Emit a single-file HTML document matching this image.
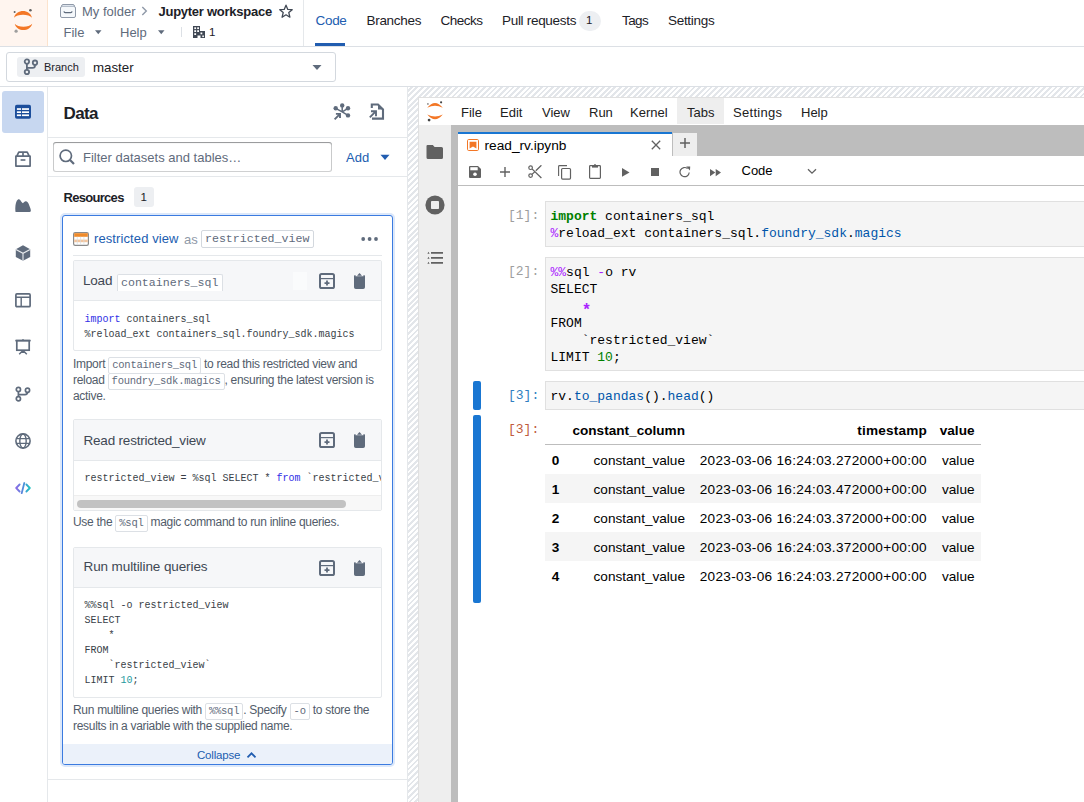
<!DOCTYPE html>
<html><head><meta charset="utf-8">
<style>
*{box-sizing:border-box;margin:0;padding:0}
html,body{width:1084px;height:802px;overflow:hidden;background:#fff;font-family:"Liberation Sans",sans-serif;color:#1C2127}
.a{position:absolute}
.t{position:absolute;white-space:pre;line-height:1}
.mono{font-family:"Liberation Mono",monospace}
svg{display:block}
.cd{font-family:"Liberation Mono",monospace;font-size:10.5px;letter-spacing:-0.25px;line-height:1;border:1px solid #DCE0E5;border-radius:2px;padding:1px 3px 2px;color:#5F6B7C;background:#fff}
</style></head><body>

<!-- ===== HEADER ===== -->
<div class="a" style="left:0;top:0;width:48px;height:46px;background:#FFF5EF;border-right:1px solid #FCE3CD"></div>
<div class="a" style="left:0;top:46px;width:1084px;height:1px;background:#DCE0E5"></div>
<div class="a" style="left:303px;top:0;width:1px;height:46px;background:#E5E8EB"></div>

<!-- header content -->
<svg class="a" style="left:12px;top:8px" width="24" height="26" viewBox="0 0 24 26">
 <path d="M2 9.8 C4 0.7 18 0.7 20 9.8 C17 5.6 5 5.6 2 9.8Z" fill="#F37726"/>
 <path d="M2.7 15.8 C4.7 24.2 18.2 24.2 20.2 15.8 C17.2 19.6 5.7 19.6 2.7 15.8Z" fill="#F37726"/>
 <circle cx="2.6" cy="4.1" r="1" fill="#616161"/>
 <circle cx="18.4" cy="2.3" r="1.3" fill="#616161"/>
 <circle cx="4.1" cy="23.2" r="1.6" fill="#9E9E9E"/>
</svg>
<svg class="a" style="left:60px;top:4px" width="16" height="14" viewBox="0 0 16 14">
 <rect x="0.5" y="2.5" width="15" height="11" rx="1.5" fill="#F5F8FB" stroke="#8F99A8"/>
 <path d="M1.5 2.5 Q1.5 0.5 3 0.5 H13 Q14.5 0.5 14.5 2.5" fill="#DCE3EC" stroke="#8F99A8"/>
 <path d="M4 7.3 Q4 8.6 5.2 8.6 H10.8 Q12 8.6 12 7.3" fill="none" stroke="#5F6B7C" stroke-width="1.1"/>
</svg>
<div class="t" style="left:82px;top:5px;font-size:13px;color:#5F6B7C">My folder</div>
<svg class="a" style="left:141px;top:6px" width="7" height="10" viewBox="0 0 7 10"><path d="M1.3 1 L5.3 5 L1.3 9" fill="none" stroke="#8F99A8" stroke-width="1.4"/></svg>
<div class="t" style="left:158.5px;top:5px;font-size:13px;font-weight:bold;letter-spacing:-0.26px;color:#1C2127">Jupyter workspace</div>
<svg class="a" style="left:279px;top:3.5px" width="14" height="15" viewBox="0 0 14 15"><path d="M7 1.2 L8.8 5.4 L13.2 5.7 L9.8 8.6 L10.9 13.2 L7 10.8 L3.1 13.2 L4.2 8.6 L0.8 5.7 L5.2 5.4Z" fill="none" stroke="#404854" stroke-width="1.3" stroke-linejoin="round"/></svg>
<div class="t" style="left:63.5px;top:26px;font-size:13px;color:#5F6B7C">File</div>
<svg class="a" style="left:95px;top:30px" width="7" height="5" viewBox="0 0 7 5"><path d="M0 0.3H6.5L3.25 4.2Z" fill="#5F6B7C"/></svg>
<div class="t" style="left:120px;top:26px;font-size:13px;color:#5F6B7C">Help</div>
<svg class="a" style="left:157.5px;top:30px" width="7" height="5" viewBox="0 0 7 5"><path d="M0 0.3H6.5L3.25 4.2Z" fill="#5F6B7C"/></svg>
<div class="a" style="left:181px;top:27px;width:1px;height:10px;background:#DCE0E5"></div>
<svg class="a" style="left:193px;top:26px" width="12" height="12" viewBox="0 0 12 12">
 <path d="M0 0H7V5H12V12H7.5V9.5H4.5V12H0Z" fill="#404854"/>
 <rect x="1.3" y="1.3" width="1.8" height="1.8" fill="#fff"/><rect x="4.2" y="1.3" width="1.8" height="1.8" fill="#fff"/>
 <rect x="1.3" y="4.2" width="1.8" height="1.8" fill="#fff"/><rect x="4.2" y="4.2" width="1.8" height="1.8" fill="#fff"/>
 <rect x="7.5" y="6.5" width="1.8" height="1.8" fill="#fff"/><rect x="1.3" y="7.2" width="1.8" height="1.8" fill="#fff"/>
 <rect x="9.3" y="9.5" width="1.6" height="1.6" fill="#fff"/>
</svg>
<div class="t" style="left:209px;top:27px;font-size:11.5px;color:#1C2127">1</div>

<div class="t" style="left:315.5px;top:14px;font-size:13.5px;letter-spacing:-0.3px;color:#215DB0">Code</div>
<div class="a" style="left:315px;top:43px;width:30px;height:3px;background:#215DB0"></div>
<div class="t" style="left:366.5px;top:14px;font-size:13.5px;letter-spacing:-0.3px">Branches</div>
<div class="t" style="left:440.5px;top:14px;font-size:13.5px;letter-spacing:-0.5px">Checks</div>
<div class="t" style="left:502px;top:14px;font-size:13.5px;letter-spacing:-0.3px">Pull requests</div>
<div class="a" style="left:579px;top:11px;width:22px;height:20px;border-radius:10px;background:#EDEFF2"></div>
<div class="t" style="left:586px;top:15px;font-size:11.5px">1</div>
<div class="t" style="left:622px;top:14px;font-size:13.5px;letter-spacing:-0.6px">Tags</div>
<div class="t" style="left:668px;top:14px;font-size:13.5px;letter-spacing:-0.3px">Settings</div>

<!-- ===== BRANCH BAR ===== -->
<div class="a" style="left:6px;top:52px;width:330px;height:30px;border:1px solid #D3D8DE;border-radius:3px"></div>
<div class="a" style="left:17px;top:57px;width:68px;height:20px;background:#EDEFF2;border-radius:3px"></div>
<svg class="a" style="left:23px;top:58px" width="16" height="18" viewBox="0 0 16 18">
 <circle cx="3.9" cy="3.6" r="2.2" fill="none" stroke="#5F6B7C" stroke-width="1.8"/>
 <circle cx="12" cy="4.7" r="2.2" fill="none" stroke="#5F6B7C" stroke-width="1.8"/>
 <circle cx="3.9" cy="14" r="2.2" fill="none" stroke="#5F6B7C" stroke-width="1.8"/>
 <path d="M3.9 5.8V11.8M12 6.9V7.5Q12 9.9 9.6 9.9H3.9" fill="none" stroke="#5F6B7C" stroke-width="1.8"/>
</svg>
<div class="t" style="left:44px;top:62px;font-size:11px;color:#1C2127">Branch</div>
<div class="t" style="left:93px;top:61px;font-size:13.3px;color:#1C2127">master</div>
<svg class="a" style="left:312px;top:64px" width="10" height="7" viewBox="0 0 10 7"><path d="M0.5 1H9.5L5 6Z" fill="#5F6B7C"/></svg>
<div class="a" style="left:0;top:86px;width:1084px;height:1px;background:#DCE0E5"></div>

<!-- ===== LEFT SIDEBAR ===== -->
<div class="a" style="left:47px;top:87px;width:1px;height:715px;background:#E5E8EB"></div>
<div class="a" style="left:2px;top:91px;width:42px;height:42px;background:#C7D7F0;border-radius:3px"></div>

<svg class="a" style="left:15px;top:104px" width="16" height="16" viewBox="0 0 16 16">
 <rect x="0" y="0.8" width="16" height="14" rx="1.8" fill="#1C4E9B"/>
 <rect x="1.9" y="4.2" width="4.2" height="1.7" fill="#fff"/><rect x="7" y="4.2" width="7" height="1.7" fill="#fff"/>
 <rect x="1.9" y="7.3" width="4.2" height="1.7" fill="#fff"/><rect x="7" y="7.3" width="7" height="1.7" fill="#fff"/>
 <rect x="1.9" y="10.4" width="4.2" height="1.7" fill="#fff"/><rect x="7" y="10.4" width="7" height="1.7" fill="#fff"/>
</svg>
<svg class="a" style="left:15px;top:151px" width="16" height="16" viewBox="0 0 16 16">
 <path d="M1.8 5.2 L3.8 1.2 H12.2 L14.2 5.2 M8 1.2 V5.2 M0.9 5.2 H15.1 V15.1 H0.9Z" fill="none" stroke="#5F6B7C" stroke-width="1.7" stroke-linejoin="round"/>
 <rect x="5.6" y="8.2" width="4.8" height="1.6" fill="#5F6B7C"/>
</svg>
<svg class="a" style="left:15px;top:198px" width="17" height="15" viewBox="0 0 17 15">
 <path d="M0.4 13.4 C0 9 0.6 5 1.8 2.8 C2.8 0.9 4.3 0.6 5.4 2.2 C6.2 3.4 7 4.8 8 5.2 C8.8 4.6 9.6 3.4 10.7 3.3 C12 3.2 13.3 4.6 14.3 7.5 C15.2 9.8 16.2 12.2 15.8 13.3 C15.6 13.9 15 14 14 14 H1.4 C0.8 14 0.5 13.8 0.4 13.4Z" fill="#5F6B7C"/>
</svg>
<svg class="a" style="left:15px;top:245px" width="16" height="16" viewBox="0 0 16 16">
 <path d="M8 0.3 L15.2 4.2 V12 L8 15.8 L0.8 12 V4.2Z" fill="#5F6B7C"/>
 <path d="M0.9 4.4 L8 8.3 L15.1 4.4 M8 8.3 V15.8" fill="none" stroke="#E8EBEE" stroke-width="1.1"/>
</svg>
<svg class="a" style="left:15px;top:292px" width="16" height="16" viewBox="0 0 16 16">
 <rect x="0.9" y="1.9" width="14.2" height="12.8" rx="1" fill="none" stroke="#5F6B7C" stroke-width="1.7"/>
 <path d="M1 5.2 H15 M6.2 5.2 V14.5" fill="none" stroke="#5F6B7C" stroke-width="1.4"/>
</svg>
<svg class="a" style="left:15px;top:339px" width="16" height="16" viewBox="0 0 16 16">
 <path d="M0.3 1.6 H15.7" stroke="#5F6B7C" stroke-width="1.6"/>
 <rect x="7.4" y="0" width="1.2" height="1" fill="#5F6B7C"/>
 <rect x="1.8" y="1.6" width="12.4" height="9.6" fill="none" stroke="#5F6B7C" stroke-width="1.7"/>
 <path d="M8 11 V14 M8 11.5 L4.2 15.2 M8 11.5 L11.8 15.2" fill="none" stroke="#5F6B7C" stroke-width="1.5"/>
</svg>
<svg class="a" style="left:15px;top:386px" width="16" height="16" viewBox="0 0 16 16">
 <circle cx="3.4" cy="3.4" r="2.1" fill="none" stroke="#5F6B7C" stroke-width="1.7"/>
 <circle cx="12.5" cy="4.2" r="2.1" fill="none" stroke="#5F6B7C" stroke-width="1.7"/>
 <circle cx="3.4" cy="12.7" r="2.1" fill="none" stroke="#5F6B7C" stroke-width="1.7"/>
 <path d="M3.4 5.5 V10.6 M12.5 6.3 Q12.5 8.6 10 8.6 H3.4" fill="none" stroke="#5F6B7C" stroke-width="1.7"/>
</svg>
<svg class="a" style="left:15px;top:433px" width="16" height="16" viewBox="0 0 16 16">
 <circle cx="8" cy="8" r="7.1" fill="none" stroke="#5F6B7C" stroke-width="1.6"/>
 <ellipse cx="8" cy="8" rx="3.2" ry="7" fill="none" stroke="#5F6B7C" stroke-width="1.4"/>
 <path d="M1 5.6 H15 M1 10.4 H15" stroke="#5F6B7C" stroke-width="1.4"/>
</svg>
<svg class="a" style="left:15px;top:482px" width="16" height="12" viewBox="0 0 16 12">
 <defs><linearGradient id="cg" x1="0" y1="0" x2="1" y2="0"><stop offset="0" stop-color="#8B6BE6"/><stop offset="0.55" stop-color="#4C8FD9"/><stop offset="1" stop-color="#1FC2C2"/></linearGradient></defs>
 <path d="M4.6 2.5 L1.2 6 L4.6 9.5 M11.4 2.5 L14.8 6 L11.4 9.5 M9.3 1 L6.7 11.2" fill="none" stroke="url(#cg)" stroke-width="1.8" stroke-linecap="round" stroke-linejoin="round"/>
</svg>

<!-- ===== DATA PANEL ===== -->
<div class="t" style="left:63.5px;top:105px;font-size:17px;font-weight:bold;letter-spacing:-0.6px;color:#1C2127">Data</div>
<svg class="a" style="left:333px;top:103px" width="18" height="18" viewBox="0 0 18 18">
 <path d="M9.2 8.9 L9.2 2.5 M9.2 8.9 L2.7 5.3 M9.2 8.9 L15 5.3 M9.2 8.9 L15 12.3" stroke="#5F6B7C" stroke-width="1.5"/>
 <circle cx="9.2" cy="2.4" r="2.2" fill="#5F6B7C"/><circle cx="2.7" cy="5.3" r="2.2" fill="#5F6B7C"/>
 <circle cx="15" cy="5.3" r="2.2" fill="#5F6B7C"/><circle cx="15" cy="12.4" r="2.2" fill="#5F6B7C"/>
 <path d="M1.6 16.3 L6.6 11.3 M2.9 10.9 H7 V15" fill="none" stroke="#5F6B7C" stroke-width="1.9"/>
</svg>
<svg class="a" style="left:369px;top:103px" width="16" height="18" viewBox="0 0 16 18">
 <path d="M2.8 5 V1.5 H9 L14 6.4 V15.6 H3" fill="none" stroke="#5F6B7C" stroke-width="2.1"/>
 <path d="M9 1.5 V6.4 H14Z" fill="#5F6B7C"/>
 <path d="M0.8 14.4 L6 9.2 M2 8.3 H7 V13.2" fill="none" stroke="#5F6B7C" stroke-width="1.9"/>
</svg>
<div class="a" style="left:52.5px;top:142px;width:279px;height:30px;border-radius:3px;background:#fff;box-shadow:inset 0 0 0 1px rgba(17,20,24,.2),inset 0 1px 1px rgba(17,20,24,.3)"></div>
<svg class="a" style="left:58px;top:148px" width="18" height="18" viewBox="0 0 18 18">
 <circle cx="7.8" cy="7.8" r="5.7" fill="none" stroke="#5F6B7C" stroke-width="1.7"/>
 <path d="M11.8 11.8 L16 16" stroke="#5F6B7C" stroke-width="2.2"/>
</svg>
<div class="t" style="left:83px;top:151px;font-size:13px;color:#5F6B7C">Filter datasets and tables…</div>
<div class="t" style="left:346px;top:151px;font-size:13px;color:#215DB0">Add</div>
<svg class="a" style="left:380px;top:154px" width="10" height="7" viewBox="0 0 10 7"><path d="M0.5 0.8H9.5L5 6Z" fill="#215DB0"/></svg>
<div class="t" style="left:63.5px;top:191px;font-size:13px;font-weight:bold;letter-spacing:-0.7px;color:#1C2127">Resources</div>
<div class="a" style="left:134px;top:187px;width:20px;height:20px;border-radius:3px;background:#EDEFF2"></div>
<div class="t" style="left:140.5px;top:192px;font-size:11.5px;color:#1C2127">1</div>

<div class="a" style="left:48px;top:137px;width:359px;height:1px;background:#E5E8EB"></div>
<div class="a" style="left:48px;top:176px;width:359px;height:1px;background:#E5E8EB"></div>
<div class="a" style="left:48px;top:779px;width:359px;height:1px;background:#E5E8EB"></div>
<div class="a" style="left:407px;top:87px;width:1px;height:715px;background:#E5E8EB"></div>

<!-- ===== RESOURCE CARD ===== -->
<div class="a" style="left:62px;top:215px;width:331px;height:550px;border:1px solid #3B7BE0;border-radius:3px;box-shadow:0 0 0 2px #DCE8FA;background:#fff;overflow:hidden">
  <div class="a" style="left:0;top:528px;width:329px;height:20px;background:#EBF1FA"></div>
</div>
<svg class="a" style="left:73px;top:232px" width="16" height="14" viewBox="0 0 16 14">
 <rect x="0.6" y="0.6" width="14.8" height="12.8" rx="1.6" fill="#fff" stroke="#8A8A8A" stroke-width="1.2"/>
 <rect x="1.2" y="1.2" width="13.6" height="3.6" fill="#EF8A2A"/>
 <rect x="1.2" y="7.6" width="13.6" height="2.6" fill="#F3C59E"/>
 <path d="M4.3 4.8V13M7.6 4.8V13M10.9 4.8V13" stroke="#D9DEE3" stroke-width="0.7"/>
</svg>
<div class="t" style="left:94px;top:232px;font-size:13px;color:#215DB0;letter-spacing:0.1px">restricted view</div>
<div class="t" style="left:184px;top:233px;font-size:13px;color:#8F99A8">as</div>
<div class="a" style="left:201px;top:230px;width:113px;height:18px;border:1px solid #D3D8DE;border-radius:2px"></div>
<div class="t mono" style="left:205px;top:233px;font-size:11.6px;color:#5F6B7C">restricted_view</div>
<svg class="a" style="left:361px;top:236px" width="18" height="6" viewBox="0 0 18 6"><circle cx="2.2" cy="3" r="1.9" fill="#5F6B7C"/><circle cx="8.6" cy="3" r="1.9" fill="#5F6B7C"/><circle cx="15" cy="3" r="1.9" fill="#5F6B7C"/></svg>
<div class="a" style="left:73px;top:255px;width:309px;height:1px;background:#E5E8EB"></div>

<!-- inner card 1 -->
<div class="a" style="left:73px;top:260px;width:309px;height:91px;border:1px solid #E5E8EB;border-radius:2px;background:#fff;overflow:hidden">
  <div class="a" style="left:0;top:0;width:307px;height:40px;background:#F6F7F9;border-bottom:1px solid #E5E8EB"></div>
  <div class="t" style="left:9px;top:13px;font-size:13.5px;color:#404854;letter-spacing:-0.2px">Load</div>
  <div class="a" style="left:43px;top:13px;width:106px;height:17px;border:1px solid #DCE0E5;border-bottom:none;border-radius:2px 2px 0 0;background:#fff"></div>
  <div class="t mono" style="left:47px;top:16px;font-size:11.6px;color:#5F6B7C">containers_sql</div>
  <div class="a" style="left:219px;top:11px;width:14px;height:18px;background:#FAFBFC"></div>
  <div class="t mono" style="left:10.5px;top:51px;font-size:10px;line-height:15px;color:#383E47"><span style="color:#2F2FE6">import</span> containers_sql
%reload_ext containers_sql.foundry_sdk.magics</div>
</div>
<div class="t" style="left:73px;top:356px;font-size:12px;line-height:16px;letter-spacing:-0.3px;color:#525C6A">Import <span class="cd">containers_sql</span> to read this restricted view and
reload <span class="cd">foundry_sdk.magics</span>, ensuring the latest version is
active.</div>

<svg class="a" style="left:319px;top:273px" width="16" height="16" viewBox="0 0 16 16">
 <rect x="1" y="1" width="14" height="14" rx="1.6" fill="none" stroke="#5F6B7C" stroke-width="2"/>
 <path d="M1.5 5.6 H14.5" stroke="#5F6B7C" stroke-width="1.2"/>
 <path d="M8 7.6 V12.6 M5.5 10.1 H10.5" stroke="#5F6B7C" stroke-width="1.8"/>
</svg>
<svg class="a" style="left:354px;top:273px" width="11" height="16" viewBox="0 0 11 16">
 <path d="M0 3.3 Q0 1.9 1.5 1.9 V3.2 H9.5 V1.9 Q11 1.9 11 3.3 V14.2 Q11 16 9.2 16 H1.8 Q0 16 0 14.2Z" fill="#5F6B7C"/>
 <path d="M3 2.7 L5.5 0 L8 2.7Z" fill="#5F6B7C"/>
</svg>
<!-- inner card 2 -->
<div class="a" style="left:73px;top:419px;width:309px;height:92px;border:1px solid #E5E8EB;border-radius:2px;background:#fff;overflow:hidden">
  <div class="a" style="left:0;top:0;width:307px;height:41px;background:#F6F7F9;border-bottom:1px solid #E5E8EB"></div>
  <div class="t" style="left:9.5px;top:13.5px;font-size:13.5px;color:#404854;letter-spacing:-0.2px">Read restricted_view</div>
  <div class="t mono" style="left:10.5px;top:51px;font-size:10px;line-height:15px;color:#383E47">restricted_view = %sql SELECT * <span style="color:#2F2FE6">from</span> `restricted_view`</div>
  <div class="a" style="left:0;top:75px;width:307px;height:15px;background:#F8F8F8;border-top:1px solid #EEEEEE"></div>
  <div class="a" style="left:3px;top:80px;width:269px;height:8px;border-radius:4px;background:#C2C2C2"></div>
</div>
<div class="t" style="left:73px;top:514px;font-size:12px;line-height:16px;letter-spacing:-0.3px;color:#525C6A">Use the <span class="cd">%sql</span> magic command to run inline queries.</div>

<svg class="a" style="left:319px;top:432px" width="16" height="16" viewBox="0 0 16 16">
 <rect x="1" y="1" width="14" height="14" rx="1.6" fill="none" stroke="#5F6B7C" stroke-width="2"/>
 <path d="M1.5 5.6 H14.5" stroke="#5F6B7C" stroke-width="1.2"/>
 <path d="M8 7.6 V12.6 M5.5 10.1 H10.5" stroke="#5F6B7C" stroke-width="1.8"/>
</svg>
<svg class="a" style="left:354px;top:432px" width="11" height="16" viewBox="0 0 11 16">
 <path d="M0 3.3 Q0 1.9 1.5 1.9 V3.2 H9.5 V1.9 Q11 1.9 11 3.3 V14.2 Q11 16 9.2 16 H1.8 Q0 16 0 14.2Z" fill="#5F6B7C"/>
 <path d="M3 2.7 L5.5 0 L8 2.7Z" fill="#5F6B7C"/>
</svg>
<!-- inner card 3 -->
<div class="a" style="left:73px;top:547px;width:309px;height:151px;border:1px solid #E5E8EB;border-radius:2px;background:#fff;overflow:hidden">
  <div class="a" style="left:0;top:0;width:307px;height:40px;background:#F6F7F9;border-bottom:1px solid #E5E8EB"></div>
  <div class="t" style="left:9.5px;top:12px;font-size:13.5px;color:#404854;letter-spacing:-0.1px">Run multiline queries</div>
  <div class="t mono" style="left:10.5px;top:50px;font-size:10px;line-height:15px;color:#383E47">%%sql -o restricted_view
SELECT
    *
FROM
    `restricted_view`
LIMIT <span style="color:#1E9AA0">10</span>;</div>
</div>
<div class="t" style="left:73px;top:702px;font-size:12px;line-height:16px;letter-spacing:-0.3px;color:#525C6A">Run multiline queries with <span class="cd">%%sql</span>. Specify <span class="cd">-o</span> to store the
results in a variable with the supplied name.</div>

<svg class="a" style="left:319px;top:560px" width="16" height="16" viewBox="0 0 16 16">
 <rect x="1" y="1" width="14" height="14" rx="1.6" fill="none" stroke="#5F6B7C" stroke-width="2"/>
 <path d="M1.5 5.6 H14.5" stroke="#5F6B7C" stroke-width="1.2"/>
 <path d="M8 7.6 V12.6 M5.5 10.1 H10.5" stroke="#5F6B7C" stroke-width="1.8"/>
</svg>
<svg class="a" style="left:354px;top:560px" width="11" height="16" viewBox="0 0 11 16">
 <path d="M0 3.3 Q0 1.9 1.5 1.9 V3.2 H9.5 V1.9 Q11 1.9 11 3.3 V14.2 Q11 16 9.2 16 H1.8 Q0 16 0 14.2Z" fill="#5F6B7C"/>
 <path d="M3 2.7 L5.5 0 L8 2.7Z" fill="#5F6B7C"/>
</svg>
<div class="t" style="left:197px;top:750px;font-size:11.5px;color:#215DB0;letter-spacing:-0.2px">Collapse</div>
<svg class="a" style="left:246px;top:751px" width="11" height="8" viewBox="0 0 11 8"><path d="M1.5 6.3 L5.5 2.3 L9.5 6.3" fill="none" stroke="#215DB0" stroke-width="1.8"/></svg>

<!-- hatch -->
<div class="a" style="left:408px;top:87px;width:676px;height:715px;background:repeating-linear-gradient(-45deg,#E3E6EA 0 2px,#fff 2px 4px)"></div>

<!-- ===== JUPYTER ===== -->
<div class="a" id="jup" style="left:418px;top:97px;width:666px;height:705px;background:#fff;border-left:1px solid #E0E0E0;border-top:1px solid #E0E0E0"></div>


<!-- menubar -->
<div class="a" style="left:419px;top:98px;width:665px;height:27px;background:#fff"></div>
<svg class="a" style="left:425px;top:100px" width="20" height="23" viewBox="0 0 20 23">
 <path d="M2.2 7.8 Q10 -1.8 17.8 7.8 Q10 3.6 2.2 7.8Z" fill="#F37726"/>
 <path d="M2.3 14.6 Q10 24 17.8 14.6 Q10 18.6 2.3 14.6Z" fill="#F37726"/>
 <circle cx="2.9" cy="3.9" r="0.9" fill="#888"/>
 <circle cx="16.1" cy="2.3" r="1.1" fill="#444"/>
 <circle cx="4.1" cy="20.1" r="1.4" fill="#444"/>
</svg>
<div class="a" style="left:677px;top:98px;width:47px;height:26px;background:#EEEEEE"></div>
<div class="t" style="left:461px;top:105.5px;font-size:13px;color:#212121">File</div>
<div class="t" style="left:500px;top:105.5px;font-size:13px;color:#212121">Edit</div>
<div class="t" style="left:542px;top:105.5px;font-size:13px;color:#212121">View</div>
<div class="t" style="left:589px;top:105.5px;font-size:13px;color:#212121">Run</div>
<div class="t" style="left:630px;top:105.5px;font-size:13px;color:#212121">Kernel</div>
<div class="t" style="left:687px;top:105.5px;font-size:13px;color:#212121">Tabs</div>
<div class="t" style="left:733px;top:105.5px;font-size:13px;letter-spacing:0.3px;color:#212121">Settings</div>
<div class="t" style="left:801px;top:105.5px;font-size:13px;color:#212121">Help</div>

<!-- side + tabbar -->
<div class="a" style="left:419px;top:125px;width:32px;height:677px;background:#EEEEEE"></div>
<div class="a" style="left:451px;top:125px;width:633px;height:677px;background:#BDBDBD"></div>
<svg class="a" style="left:426px;top:144px" width="18" height="16" viewBox="0 0 18 16">
 <path d="M1.5 1 H6.8 L8.6 3 H15.5 Q17 3 17 4.5 V13.5 Q17 15 15.5 15 H2 Q0.5 15 0.5 13.5 V2 Q0.5 1 1.5 1Z" fill="#616161"/>
</svg>
<svg class="a" style="left:425px;top:195px" width="20" height="20" viewBox="0 0 20 20">
 <circle cx="10" cy="10" r="9.6" fill="#616161"/>
 <rect x="6" y="6" width="8" height="8" rx="0.8" fill="#EEEEEE"/>
</svg>
<svg class="a" style="left:427px;top:250px" width="16" height="15" viewBox="0 0 16 15">
 <path d="M4 2.9 H16 M4 7.9 H16 M4 12.9 H16" stroke="#616161" stroke-width="1.7"/>
 <path d="M0.4 3.8 L1.5 1.8 L2.6 3.8Z M0.4 8.8 L1.5 6.8 L2.6 8.8Z M0.4 13.8 L1.5 11.8 L2.6 13.8Z" fill="#616161"/>
</svg>

<div class="a" style="left:458px;top:132px;width:214px;height:24px;background:#fff;border-top:2px solid #1976D2"></div>
<div class="a" style="left:672px;top:132px;width:26px;height:24px;background:#EEEEEE;border:1px solid #BDBDBD;border-bottom:none"></div>
<svg class="a" style="left:467px;top:139px" width="12" height="12" viewBox="0 0 12 12">
 <rect x="0.5" y="0.5" width="11" height="11" rx="1.2" fill="#fff" stroke="#F37726"/>
 <path d="M2.6 2.8 H9.4 V9.4 L6 7.6 L2.6 9.4Z" fill="#F37726"/>
</svg>
<div class="t" style="left:484.5px;top:139px;font-size:13.7px;color:#000">read_rv.ipynb</div>
<svg class="a" style="left:651px;top:140px" width="10" height="10" viewBox="0 0 10 10"><path d="M0.8 0.8 L9.2 9.2 M9.2 0.8 L0.8 9.2" stroke="#616161" stroke-width="1.3"/></svg>
<svg class="a" style="left:679px;top:137px" width="12" height="12" viewBox="0 0 12 12"><path d="M6 1 V11 M1 6 H11" stroke="#616161" stroke-width="1.5"/></svg>

<!-- toolbar -->
<div class="a" style="left:458px;top:156px;width:626px;height:30px;background:#fff;border-bottom:1px solid #BDBDBD"></div>
<svg class="a" style="left:469px;top:166px" width="12" height="12" viewBox="0 0 12 12">
 <path d="M1 0 H9 L12 3 V11 Q12 12 11 12 H1 Q0 12 0 11 V1 Q0 0 1 0Z" fill="#616161"/>
 <rect x="1.3" y="1.2" width="7.4" height="3.1" fill="#fff"/>
 <circle cx="6" cy="8.3" r="1.8" fill="#fff"/>
</svg>
<svg class="a" style="left:500px;top:167px" width="10" height="10" viewBox="0 0 10 10"><path d="M5 0 V10 M0 5 H10" stroke="#616161" stroke-width="1.4"/></svg>
<svg class="a" style="left:528px;top:165px" width="14" height="14" viewBox="0 0 14 14">
 <circle cx="2.6" cy="2.7" r="1.8" fill="none" stroke="#616161" stroke-width="1.2"/>
 <circle cx="2.6" cy="10.6" r="1.8" fill="none" stroke="#616161" stroke-width="1.2"/>
 <path d="M4 3.9 L13.4 13 M4 9.4 L6.4 7.1 M7.8 5.7 L13.4 0.3" stroke="#616161" stroke-width="1.3"/>
</svg>
<svg class="a" style="left:558px;top:165px" width="14" height="15" viewBox="0 0 14 15">
 <path d="M0.6 11 V1.5 Q0.6 0.6 1.5 0.6 H9" fill="none" stroke="#616161" stroke-width="1.1"/>
 <rect x="3.6" y="3.5" width="8.9" height="10.6" rx="1" fill="none" stroke="#616161" stroke-width="1.2"/>
</svg>
<svg class="a" style="left:589px;top:164px" width="12" height="15" viewBox="0 0 12 15">
 <rect x="0.6" y="1.6" width="10.8" height="12.8" rx="0.8" fill="none" stroke="#616161" stroke-width="1.2"/>
 <path d="M3 1 H9 V3.6 H3Z" fill="#616161"/>
 <circle cx="6" cy="0.9" r="0.9" fill="#616161"/>
</svg>
<svg class="a" style="left:622px;top:167.5px" width="8" height="9" viewBox="0 0 8 9"><path d="M0 0 L7.5 4.4 L0 8.8Z" fill="#616161"/></svg>
<div class="a" style="left:651px;top:168px;width:8px;height:8px;background:#616161"></div>
<svg class="a" style="left:679px;top:166px" width="12" height="12" viewBox="0 0 12 12">
 <path d="M10.2 6.5 A4.6 4.6 0 1 1 8.6 2.6" fill="none" stroke="#616161" stroke-width="1.2"/>
 <path d="M7.2 0.6 L11.2 0.6 L11 4.6Z" fill="#616161"/>
</svg>
<svg class="a" style="left:709.5px;top:168.5px" width="12" height="8" viewBox="0 0 12 8"><path d="M0 0 L5.3 3.6 L0 7.2Z M5.7 0 L11 3.6 L5.7 7.2Z" fill="#616161"/></svg>
<div class="t" style="left:741.5px;top:164px;font-size:13px;color:#000">Code</div>
<svg class="a" style="left:807px;top:168px" width="10" height="7" viewBox="0 0 10 7"><path d="M1 1.2 L5 5.2 L9 1.2" fill="none" stroke="#616161" stroke-width="1.3"/></svg>

<!-- notebook -->
<div class="a" style="left:458px;top:186px;width:626px;height:616px;background:#fff"></div>


<!-- cell 1 -->
<div class="t mono" style="left:508px;top:209px;font-size:13px;color:#9E9E9E">[1]:</div>
<div class="a" style="left:545px;top:201px;width:545px;height:46px;background:#F5F5F5;border:1px solid #E0E0E0"></div>
<div class="t mono" style="left:550.5px;top:207.5px;font-size:13px;line-height:17px;color:#000"><span style="color:#008000;font-weight:bold">import</span> containers_sql
<span style="color:#AA22FF">%</span>reload_ext containers_sql.<span style="color:#0055AA">foundry_sdk</span>.<span style="color:#0055AA">magics</span></div>

<!-- cell 2 -->
<div class="t mono" style="left:508px;top:265px;font-size:13px;color:#9E9E9E">[2]:</div>
<div class="a" style="left:545px;top:257px;width:545px;height:114px;background:#F5F5F5;border:1px solid #E0E0E0"></div>
<div class="t mono" style="left:550.5px;top:263.5px;font-size:13px;line-height:17px;color:#000"><span style="color:#AA22FF">%%</span>sql <span style="color:#AA22FF">-</span>o rv
SELECT
    <span style="color:#AA22FF;font-weight:bold;font-size:16px;letter-spacing:-1.8px;position:relative;top:5px">*</span>
FROM
    `restricted_view`
LIMIT <span style="color:#008000">10</span>;</div>

<!-- cell 3 -->
<div class="a" style="left:473px;top:381px;width:8px;height:29px;background:#1976D2;border-radius:2px"></div>
<div class="t mono" style="left:508px;top:389px;font-size:13px;color:#307FC1">[3]:</div>
<div class="a" style="left:545px;top:381px;width:545px;height:29px;background:#F5F5F5;border:1px solid #E0E0E0"></div>
<div class="t mono" style="left:550.5px;top:388px;font-size:13px;line-height:17px;color:#000">rv.<span style="color:#0055AA">to_pandas</span>().<span style="color:#0055AA">head</span>()</div>

<!-- output -->
<div class="a" style="left:473px;top:415px;width:8px;height:188px;background:#1976D2;border-radius:2px"></div>
<div class="t mono" style="left:508px;top:423px;font-size:13px;color:#BF5B3D">[3]:</div>
<div class="a" style="left:545px;top:444px;width:436px;height:1px;background:#BDBDBD"></div>
<div class="a" style="left:545px;top:474px;width:436px;height:29px;background:#F5F5F5"></div>
<div class="a" style="left:545px;top:532px;width:436px;height:29px;background:#F5F5F5"></div>
<div class="a" style="left:545px;top:415px;width:436px;height:175px;font-size:13.6px;color:#000">
 <div class="t" style="left:0;top:9px;width:140px;text-align:right;font-weight:bold">constant_column</div>
 <div class="t" style="left:200px;top:9px;width:182px;text-align:right;font-weight:bold;letter-spacing:0.2px">timestamp</div>
 <div class="t" style="left:380px;top:9px;width:49.5px;text-align:right;font-weight:bold">value</div>
 <div class="t" style="left:5.5px;top:31px;font-weight:bold;line-height:29px;width:10px;text-align:center">0
1
2
3
4</div>
 <div class="t" style="left:0;top:31px;width:140px;text-align:right;line-height:29px">constant_value
constant_value
constant_value
constant_value
constant_value</div>
 <div class="t" style="left:100px;top:31px;width:282px;text-align:right;line-height:29px;letter-spacing:0.31px">2023-03-06 16:24:03.272000+00:00
2023-03-06 16:24:03.472000+00:00
2023-03-06 16:24:03.372000+00:00
2023-03-06 16:24:03.372000+00:00
2023-03-06 16:24:03.272000+00:00</div>
 <div class="t" style="left:380px;top:31px;width:49.5px;text-align:right;line-height:29px">value
value
value
value
value</div>
</div>

</body></html>
